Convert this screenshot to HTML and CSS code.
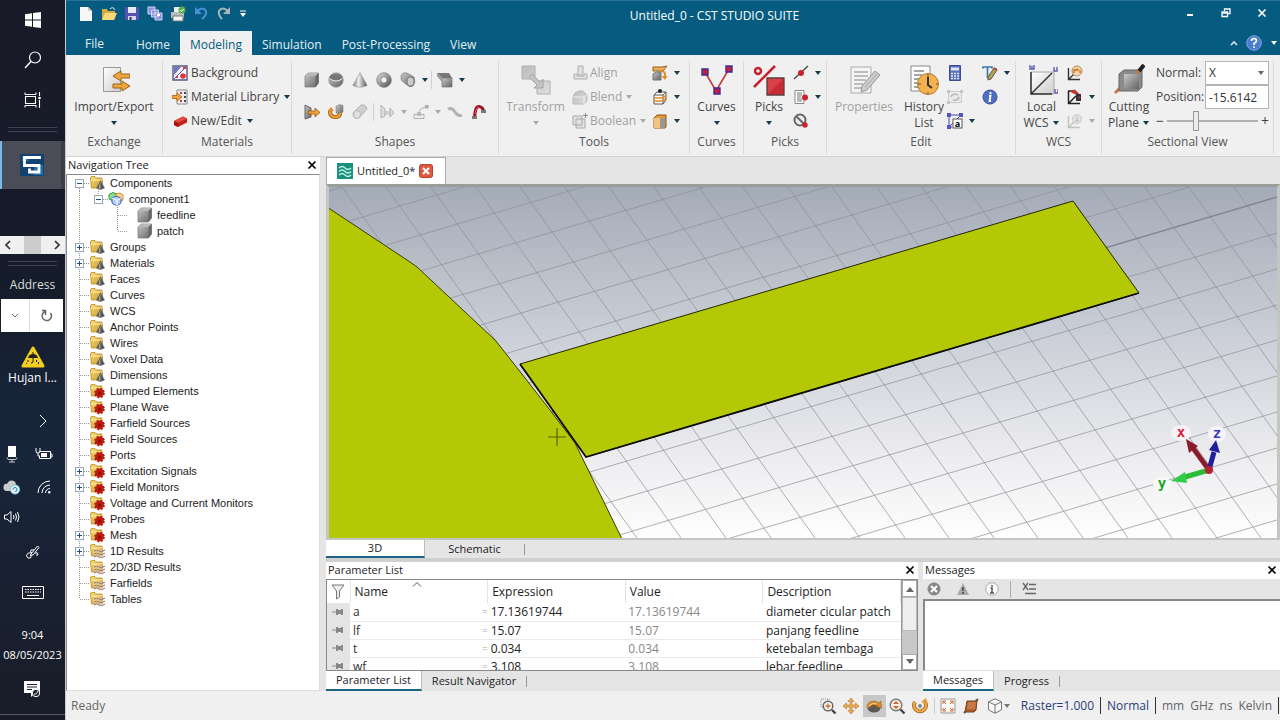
FILE: index.html
```html
<!DOCTYPE html>
<html lang="en">
<head>
<meta charset="utf-8">
<title>Untitled_0 - CST STUDIO SUITE</title>
<link rel="stylesheet" href="styles.css">
</head>
<body>
<svg class="defs" aria-hidden="true">
  <defs>
    <linearGradient id="gGrey" x1="0" y1="0" x2="1" y2="1"><stop offset="0" stop-color="#c9c9c9"/><stop offset="1" stop-color="#626262"/></linearGradient>
    <linearGradient id="gCone" x1="0" x2="1"><stop offset="0" stop-color="#777"/><stop offset=".4" stop-color="#eee"/><stop offset="1" stop-color="#555"/></linearGradient>
    <linearGradient id="gLight" x1="0" y1="0" x2="1" y2="1"><stop offset="0" stop-color="#bdbdbd"/><stop offset="1" stop-color="#dedede"/></linearGradient>
    <linearGradient id="gPlane" x1="0" y1="0" x2="1" y2="1"><stop offset="0" stop-color="#fff"/><stop offset="1" stop-color="#ccc"/></linearGradient>
    <linearGradient id="gFold" x1="0" y1="0" x2="1" y2="1"><stop offset="0" stop-color="#f7dc82"/><stop offset="1" stop-color="#cf9c1f"/></linearGradient>
    <linearGradient id="gSky" x1="0" y1="0" x2="0" y2="1"><stop offset="0" stop-color="#a4abb8"/><stop offset=".5" stop-color="#d2d5dc"/><stop offset=".75" stop-color="#ebebee"/><stop offset="1" stop-color="#fefefe"/></linearGradient>
  </defs>
  <symbol id="arrow" viewBox="0 0 8 8"><path d="M1 2h6L4 6z" fill="currentColor"/></symbol>
  <symbol id="close" viewBox="0 0 10 10"><path d="M1.500 1.500l7 7m0-7l-7 7" stroke="currentColor" stroke-width="1.700"/></symbol>
  <!-- tree lines -->
  <symbol id="t-v" viewBox="0 0 19 16"><path d="M9.500 0v16" stroke="#999" stroke-dasharray="1 1"/></symbol>
  <symbol id="t-n" viewBox="0 0 19 16"><path d="M9.500 0v16M10 8.500h10" stroke="#999" stroke-dasharray="1 1"/></symbol>
  <symbol id="t-l" viewBox="0 0 19 16"><path d="M9.500 0v8M10 8.500h10" stroke="#999" stroke-dasharray="1 1"/></symbol>
  <symbol id="t-plus" viewBox="0 0 19 16"><path d="M9.500 0v16M14 8.500h6" stroke="#999" stroke-dasharray="1 1"/><rect x="5.500" y="4.500" width="8" height="8" fill="#fff" stroke="#9aa8b4"/><path d="M7 8.500h5M9.500 6v5" stroke="#234b86"/></symbol>
  <symbol id="t-minus" viewBox="0 0 19 16"><path d="M9.500 13v3M14 8.500h6" stroke="#999" stroke-dasharray="1 1"/><rect x="5.500" y="4.500" width="8" height="8" fill="#fff" stroke="#9aa8b4"/><path d="M7 8.500h5" stroke="#234b86"/></symbol>
  <symbol id="t-minus2" viewBox="0 0 19 16"><path d="M9.500 0v4M14 8.500h6" stroke="#999" stroke-dasharray="1 1"/><rect x="5.500" y="4.500" width="8" height="8" fill="#fff" stroke="#9aa8b4"/><path d="M7 8.500h5" stroke="#234b86"/></symbol>
  <symbol id="folder" viewBox="0 0 16 16"><path d="M1.500 3q0-1.500 1.500-1.500h3l1.500 1.500h5.500v2l.5 1v7H2.500z" fill="url(#gFold)" stroke="#b98a1c" stroke-width=".8"/><path d="M2 5h11" stroke="#fff0b0"/></symbol>
  <symbol id="f-cone" viewBox="0 0 16 16"><use href="#folder"/><path d="M11.500 5.500L7.500 13q3.500 3 8 0z" fill="#555" stroke="#777" stroke-width=".5"/><path d="M11.400 6L9.500 13.500h2z" fill="#aaa"/></symbol>
  <symbol id="f-gear" viewBox="0 0 16 16"><use href="#folder"/><circle cx="10.500" cy="10" r="4.300" fill="#c01c10" stroke="#b41408" stroke-width="2" stroke-dasharray="1.900 1.470"/><circle cx="10.500" cy="10" r="1.400" fill="#701008"/></symbol>
  <symbol id="f-wave" viewBox="0 0 16 16"><use href="#folder"/><path d="M5 8q2.500-2 5 0t6-1M5 11q2.500-2 5 0t6-1M5 14q2.500-2 5 0t6-1" stroke="#fff" stroke-width="2" stroke-opacity=".6" fill="none"/><path d="M5 8q2.500-2 5 0t6-1M5 11q2.500-2 5 0t6-1M5 14q2.500-2 5 0t6-1" stroke="#8c6a7c" fill="none"/></symbol>
  <symbol id="comp" viewBox="0 0 16 16"><path d="M1 3.500l4-2 4 1.500v5L5 10 1 8z" fill="#8edb8a" stroke="#2e9b35"/><path d="M8 3l4-1 3 2v5l-4 2-3-2z" fill="#ffd690" stroke="#d88a22"/><path d="M4 7l4-2 5 2v5l-4 3-5-3z" fill="#b8cdf8" stroke="#3564c8"/><path d="M4 7l5 2.500L13 7M9 9.500V15" fill="none" stroke="#fff"/></symbol>
  <symbol id="cube" viewBox="0 0 16 16"><path d="M1 4l3-3h10.500v10l-3 4H1z" fill="url(#gGrey)" stroke="#777" stroke-width=".7"/><path d="M1 4l3-3h10.500l-3 3z" fill="#b9b9b9"/><path d="M11.500 4l3-3v10l-3 4z" fill="#666"/></symbol>
  <!-- ribbon icons, small -->
  <symbol id="sphere" viewBox="0 0 16 16"><circle cx="8" cy="8" r="7.200" fill="url(#gGrey)" stroke="#777" stroke-width=".6"/><ellipse cx="8" cy="5.500" rx="6.500" ry="3.500" fill="#777"/><path d="M1.500 6.500q6.500 5 13 0" stroke="#eee" fill="none"/></symbol>
  <symbol id="cone" viewBox="0 0 16 16"><path d="M8 .5L.8 13.500q7 3.500 14.400 0z" fill="url(#gCone)" stroke="#888" stroke-width=".5"/></symbol>
  <symbol id="torus" viewBox="0 0 16 16"><circle cx="8" cy="8" r="5" fill="none" stroke="url(#gGrey)" stroke-width="5"/><circle cx="8" cy="8" r="7.300" fill="none" stroke="#777" stroke-width=".6"/></symbol>
  <symbol id="cyl" viewBox="0 0 16 16"><path d="M1 4q1-4 6-3l7 4q2 5-1 9-3 2-6-1L2 9Q.5 7 1 4z" fill="url(#gGrey)" stroke="#777" stroke-width=".6"/><ellipse cx="10.500" cy="9.500" rx="3.500" ry="4.500" fill="#ccc" stroke="#777"/></symbol>
  <symbol id="bend" viewBox="0 0 16 16"><path d="M0 1h12l3 5H5z" fill="#777"/><path d="M5 6h10v9H5z" fill="url(#gGrey)" stroke="#777" stroke-width=".7"/><path d="M0 1l5 5v4L0 4z" fill="#999"/></symbol>
  <symbol id="extrude" viewBox="0 0 16 16"><path d="M1 1l6 3v9l-6 2z" fill="url(#gGrey)" stroke="#666"/><path d="M4 7h7V4l5 4.500-5 4.500v-3H4z" fill="#eda13a" stroke="#995c10" stroke-width=".8"/></symbol>
  <symbol id="rotate" viewBox="0 0 16 16"><path d="M8 2l4-1.500 3 1V8l-3 2-4-1z" fill="url(#gGrey)" stroke="#777" stroke-width=".5"/><path d="M2 7q0 6 5 6t5-4" fill="none" stroke="#8f5410" stroke-width="4"/><path d="M2 7q0 6 5 6t5-4" fill="none" stroke="#ee9c32" stroke-width="2.600"/><path d="M-.5 7L3 3l3 4z" fill="#e48d24"/></symbol>
  <symbol id="loft" viewBox="0 0 16 16"><path d="M1 9l8-8q5-1 6 4l-8 9q-6 2-6-5z" fill="#cfcfcf" stroke="#b4b4b4"/><ellipse cx="5" cy="10.500" rx="3.500" ry="4" fill="#e0e0e0" stroke="#b8b8b8"/></symbol>
  <symbol id="d-ext" viewBox="0 0 16 16"><path d="M2 1v13l4-2V5zM5 8h6M5 10h6M11 4l4 5-4 4z" fill="#ddd" stroke="#b4b4b4"/></symbol>
  <symbol id="d-curve" viewBox="0 0 16 16"><path d="M1 10.500h10v4H1zM6 10q0-6 7-7" fill="none" stroke="#b0b0b0"/><rect x="4" y="8" width="4" height="4" fill="#bbb"/><rect x="12" y="1" width="3.500" height="3.500" fill="#aaa"/></symbol>
  <symbol id="d-wave" viewBox="0 0 16 16"><path d="M1 5q4-2 7 3t7 3" fill="none" stroke="#b2b2b2" stroke-width="3"/></symbol>
  <symbol id="wire" viewBox="0 0 16 16"><path d="M3.500 14Q4 2 8 2.500t4.500 5" fill="none" stroke="#9e1426" stroke-width="3.200"/><path d="M4 10q1-7 4-7" fill="none" stroke="#f05060"/><path d="M1 12h5v3H1zM10 6h5v3h-5z" fill="#777"/></symbol>
  <symbol id="bg" viewBox="0 0 16 16"><path d="M1 1h14v14H1z" fill="#eef" stroke="#5a5a88" stroke-width="1.400"/><path d="M2 14L14 2v12z" fill="#fff"/><path d="M2 2h7l-7 8z" fill="#7478b8"/><path d="M2 14L14 2" stroke="#55b"/><circle cx="11" cy="11" r="2.800" fill="#d83944"/><path d="M11 3h3M4 12h2" stroke="#c44" stroke-width="2"/></symbol>
  <symbol id="matlib" viewBox="0 0 16 16"><path d="M5 1h10v14H5z" fill="#eee" stroke="#888"/><path d="M8 3h2v2H8zM8 11h2v2H8z" fill="#d33"/><path d="M12 3h2v2h-2zM12 7h2v2h-2zM12 11h2v2h-2z" fill="#446"/><path d="M0 6.500h5V4l5 4-5 4V9.500H0z" fill="#f0a440" stroke="#a66510" stroke-width=".8"/></symbol>
  <symbol id="brick" viewBox="0 0 16 16"><path d="M2 8l9-4.500 4 2v4L6 14l-4-2z" fill="#c5201c"/><path d="M2 8l9-4.500 4 2L6 10z" fill="#e04c40"/><path d="M2 8l4 2v4l-4-2z" fill="#a11210"/></symbol>
  <symbol id="align" viewBox="0 0 16 16"><path d="M6 1h5v9H6zM2 9h3v2h7V9h3v5H2z" fill="#e0e0e0" stroke="#b0b0b0"/></symbol>
  <symbol id="blend" viewBox="0 0 16 16"><path d="M1 15V8q1-5 6-6h4l4 4v6l-3 3z" fill="url(#gLight)" stroke="#b8b8b8"/><path d="M1 8h11v7M12 8l3-2" fill="none" stroke="#eee"/></symbol>
  <symbol id="bool" viewBox="0 0 16 16"><path d="M1 3h9v9H1zM4 6h9v9H4z" fill="#ddd" fill-opacity=".8" stroke="#aaa"/><path d="M11 2.500h5M13.500 0v5" stroke="#888"/></symbol>
  <symbol id="tl1" viewBox="0 0 16 16"><path d="M1 2h9l5-1-4 5H1z" fill="#ecae5c" stroke="#99601c"/><path d="M1 15V9q3-3 8-2v8z" fill="url(#gGrey)" stroke="#777"/><path d="M9 6q5 0 4 6" fill="none" stroke="#e08a22" stroke-width="2"/><path d="M9.500 11h6L13 15z" fill="#e08a22"/></symbol>
  <symbol id="tl2" viewBox="0 0 16 16"><path d="M2 6l3-3h9v8l-3 4H2z" fill="#fff" stroke="#555"/><path d="M2 6h9v9M11 6l3-3" stroke="#555" fill="none"/><path d="M2 9l9 0 3-3M2 12h9l3-3" stroke="#e08a22" stroke-width="1.500" fill="none"/><circle cx="8" cy="2" r="2" fill="#222"/></symbol>
  <symbol id="tl3" viewBox="0 0 16 16"><path d="M2 5l3-3h9v12l-1 1H2z" fill="#e29a3c" stroke="#8c5510"/><path d="M8 5h5v10H8z" fill="#999"/><path d="M2 5h6v10H2z" fill="#f4c47a"/></symbol>
  <symbol id="pk1" viewBox="0 0 16 16"><path d="M1 14L15 1" stroke="#444" stroke-width="1.300"/><circle cx="8" cy="8" r="3" fill="#c8232c"/></symbol>
  <symbol id="pk2" viewBox="0 0 16 16"><path d="M2 1.500h9v13H2z" fill="#fff" stroke="#888"/><path d="M4 4h5M4 6h5M4 8h4M4 10h5M4 12h5" stroke="#777"/><circle cx="12" cy="8.500" r="3" fill="#c8232c"/></symbol>
  <symbol id="pk3" viewBox="0 0 16 16"><circle cx="7" cy="7" r="5.500" fill="#eee" stroke="#666" stroke-width="2"/><path d="M3 3l8 8" stroke="#666" stroke-width="2"/><circle cx="12" cy="12" r="2.700" fill="#c8232c"/></symbol>
  <symbol id="calc" viewBox="0 0 16 16"><path d="M2.500 .5h11v15h-11z" fill="#5a6fb8" stroke="#3b4d90"/><path d="M4 2.500h8v3H4z" fill="#dde6fa"/><path d="M4 8.500h8M4 11h8M4 13.500h8" stroke="#dde6fa" stroke-width="1.300" stroke-dasharray="2 1"/></symbol>
  <symbol id="refr" viewBox="0 0 16 16"><path d="M1.500 2.500h13v11h-13z" fill="#eaeaea" stroke="#ccc"/><path d="M0 1h3v3H0zM13 1h3v3h-3zM0 12h3v3H0z" fill="#c4c4c4"/><path d="M4 8q1-4 7-2M12 8q-1 4-6 3" fill="none" stroke="#b8b8b8" stroke-width="1.500"/></symbol>
  <symbol id="parama" viewBox="0 0 16 16"><path d="M2 2l12 0M2 2v12h3M2 14L14 2" fill="none" stroke="#4646b0"/><path d="M0 0h4v4H0zM12 0h4v4h-4zM0 12h4v4H0z" fill="#5555c0"/><rect x="6" y="6" width="9" height="9" fill="#fff" stroke="#555"/><text x="10.500" y="13.500" font-size="9" font-weight="bold" text-anchor="middle">a</text></symbol>
  <symbol id="tpen" viewBox="0 0 16 16"><path d="M1 3.500V2h9v1.500M5.500 2v11" fill="none" stroke="#3c78b0" stroke-width="1.700"/><path d="M6 12L12 3l3 2-6 9-3 1z" fill="#b8a24c" stroke="#555"/><path d="M12 3l3 2" stroke="#c33" stroke-width="2"/></symbol>
  <symbol id="info" viewBox="0 0 16 16"><circle cx="8" cy="8" r="7" fill="#4f6fc4" stroke="#3450a0"/><path d="M8.500 3v2.200M7 7h1.500l-1 5h1.500" stroke="#fff" stroke-width="1.800" fill="none"/></symbol>
  <symbol id="w1" viewBox="0 0 16 16"><path d="M1.500 3v11.500H13M2 14l5-5" fill="none" stroke="#333" stroke-width="1.400"/><circle cx="10" cy="6" r="5" fill="#f3d6b0" stroke="#b98a5a"/><path d="M7 8V5h4l-1-1.500M13 5v3" stroke="#d07018" fill="none" stroke-width="1.300"/></symbol>
  <symbol id="w2" viewBox="0 0 16 16"><path d="M1.500 2v12.500H13M2 14l7-7M1 2h6" fill="none" stroke="#222" stroke-width="1.500"/><path d="M4 2l6 3M7 1l5 5" stroke="#c33" stroke-width="2"/><path d="M9 5h5v7H9z" fill="#333"/><path d="M12 7v3" stroke="#d33"/></symbol>
  <symbol id="w3" viewBox="0 0 16 16"><path d="M1.500 3v11.500H13M2 14l9-9" fill="none" stroke="#c0c0c0" stroke-width="1.400"/><circle cx="10" cy="6" r="4.500" fill="#e4e4e4" stroke="#c8c8c8"/><path d="M10 3v6M8 7q2 3 4 0" fill="none" stroke="#bbb"/></symbol>
  <!-- ribbon icons, large -->
  <symbol id="impexp" viewBox="0 0 32 32"><path d="M5.500 3.500h17v24h-17z" fill="url(#gPlane)" stroke="#999"/><path d="M32 10h-9V7l-8 5 8 5v-3h9zM15 20h9v-3l8 5-8 5v-3h-9z" fill="#efa63e" stroke="#9a6216"/></symbol>
  <symbol id="transform" viewBox="0 0 32 32"><path d="M2 2h13v13H2zM17 17h13v13H17z" fill="url(#gLight)" stroke="#b0b0b0"/><path d="M12 10l8 8 3-3v9h-9l3-3-8-8z" fill="#c4c4c4" stroke="#a4a4a4"/></symbol>
  <symbol id="curves" viewBox="0 0 32 32"><path d="M4 8l11 19L28 5" fill="none" stroke="#c8323a" stroke-width="1.500"/><path d="M1 5h6v6H1zM25 2h6v6h-6zM13 24h6v6h-6z" fill="#c81e3a" stroke="#3c2c98" stroke-width="1.400"/></symbol>
  <symbol id="picks" viewBox="0 0 32 32"><path d="M1 23L22 2" stroke="#c42430" stroke-width="2.600"/><circle cx="5" cy="7" r="3" fill="none" stroke="#c42430" stroke-width="2.500"/><path d="M14 14h17v17H14z" fill="#c92a34" stroke="#5c4040" stroke-width="1.300"/><path d="M15 15h15L15 30z" fill="#d94048"/></symbol>
  <symbol id="props" viewBox="0 0 32 32"><path d="M3 3h20v26H3z" fill="#f4f4f4" stroke="#aaa"/><path d="M6 8h14M6 12h14M6 16h12M6 20h9M6 24h9" stroke="#aaa" stroke-width="1.500"/><path d="M14 22L27 7l5 4-13 15-6 2z" fill="#ccc" stroke="#999"/><path d="M17 23L29 10" stroke="#aaa"/></symbol>
  <symbol id="history" viewBox="0 0 32 32"><path d="M3 2h19v25H3z" fill="#fff" stroke="#888"/><path d="M6 7h10M6 11h8M6 15h5M6 19h4M6 23h5" stroke="#888" stroke-width="1.500"/><circle cx="20" cy="20" r="10.500" fill="#f3b24d" stroke="#b77a24"/><path d="M20 13v8l4 3" stroke="#333" stroke-width="2" fill="none"/><path d="M20 10v3M20 28v2M10 20h3M28 20h2" stroke="#555"/></symbol>
  <symbol id="wcs" viewBox="0 0 32 32"><path d="M5 8h23v22H5z" fill="url(#gPlane)" stroke="#aaa"/><path d="M5 8v22h21M5 30L26 9" fill="none" stroke="#333" stroke-width="1.500"/><path d="M4 1v4h2V2v3h2V1M28 3v4h3V3M29 25v4h3v-4" fill="none" stroke="#5c5cb8" stroke-width="1.400"/></symbol>
  <symbol id="cut" viewBox="0 0 32 32"><path d="M2 29l7-7" stroke="#d4763a" stroke-width="3"/><path d="M6 10l5-4h18v17l-4 4H6z" fill="#8a8a8a" stroke="#666"/><path d="M11 10h15v15H11z" fill="url(#gGrey)"/><path d="M24 9l3-3" stroke="#d4763a" stroke-width="3"/><path d="M26 7l5-6" stroke="#222" stroke-width="4"/></symbol>
</svg>

<div class="screen">
  <aside class="taskbar">
    <button class="tb-btn" aria-label="Start"><svg width="16" height="16" viewBox="0 0 16 16"><path d="M0 2.200l7-1v6.300H0zM8 1l8-1v7.500H8zM0 8.500h7v6.300l-7-1zM8 8.500h8V16l-8-1z" fill="#fff"/></svg></button>
    <button class="tb-btn" aria-label="Search"><svg width="18" height="18" viewBox="0 0 18 18"><circle cx="11" cy="6.500" r="5.500" fill="none" stroke="#fff" stroke-width="1.200"/><path d="M7 10.500L1 17" stroke="#fff" stroke-width="1.400"/></svg></button>
    <button class="tb-btn" aria-label="Task view"><svg width="18" height="16" viewBox="0 0 18 16"><path d="M1.500 4.500h10v7h-10zM1 2.500V.5M12 2.500V.5M1 2.500h11M1 13.500h11v2M1 13.500v2M15.500 0v4M15.500 8v8" fill="none" stroke="#fff" stroke-width="1.100"/><circle cx="15.500" cy="6" r="1.300" fill="#fff"/></svg></button>
    <div class="grip"></div>
    <button class="tb-active" aria-label="CST Studio Suite"><svg width="24" height="24" viewBox="0 0 24 24"><path d="M0 1h24v22H0z" fill="#124270"/><path d="M2 3h7v5H2zM14 12h9v10h-9z" fill="#1e6fae"/><path d="M21 4.500H4.500v8H19v6.500H9.500v-3.500" fill="none" stroke="#fff" stroke-width="2.800"/></svg></button>
    <div class="tb-gap"></div>
    <div class="tb-scroll"><svg width="8" height="10" viewBox="0 0 8 10"><path d="M6 1L2 5l4 4" fill="none" stroke="#333" stroke-width="1.700"/></svg><i></i><svg width="8" height="10" viewBox="0 0 8 10"><path d="M2 1l4 4-4 4" fill="none" stroke="#333" stroke-width="1.700"/></svg></div>
    <div class="grip"></div>
    <div class="tb-addr">Address</div>
    <div class="tb-box">
      <button aria-label="Previous locations"><svg width="8" height="6" viewBox="0 0 8 6"><path d="M1 1l3 3 3-3" fill="none" stroke="#666"/></svg></button>
      <button aria-label="Refresh"><svg width="12" height="13" viewBox="0 0 12 13"><path d="M4 2.500A4.700 4.700 0 1 0 9.500 4M1 1.500h3.500V6" fill="none" stroke="#666" stroke-width="1.500"/></svg></button>
    </div>
    <div class="tb-warn"><svg width="26" height="24" viewBox="0 0 26 24"><path d="M13 3l10 18H3z" fill="#f4ce1c" stroke="#f4ce1c" stroke-width="3" stroke-linejoin="round"/><path d="M8 13q1-4 5-4t5 4z" fill="#222"/><path d="M13 7v10q-1 2-2 .5" stroke="#222" fill="none"/><path d="M8 15v2M16.500 15v2M18.500 17v2M6.500 18v1" stroke="#222"/></svg></div>
    <div class="tb-news">Hujan l...</div>
    <div class="tb-more"><svg width="8" height="14" viewBox="0 0 8 14"><path d="M1 1l6 6-6 6" fill="none" stroke="#fff"/></svg></div>
    <div class="tb-pair">
      <svg width="12" height="18" viewBox="0 0 12 18"><path d="M2 1h8v11H2z" fill="#fff"/><path d="M1 12.500q0 2 2 2h6q2 0 2-2M6 15v2M3 17h6" fill="none" stroke="#ccc"/></svg>
      <svg width="18" height="14" viewBox="0 0 18 14"><path d="M4.500 4.500h11v7h-11V9M15.500 7h1.500v3h-1.500" fill="none" stroke="#fff"/><path d="M6 6h6v4H6z" fill="#fff"/><path d="M1 1v3q0 2 2 2t2-2V1M3 6v3h2" fill="none" stroke="#fff"/></svg>
    </div>
    <div class="tb-pair">
      <svg width="18" height="16" viewBox="0 0 18 16"><path d="M4 12q-4 0-3.500-4T4 5q2-5 7-3 2 1 2 4l-3 6z" fill="#ccc"/><circle cx="12" cy="10.500" r="4.600" fill="#e4f4fc" stroke="#7fc0de"/><path d="M10 10.500a2 2 0 1 1 2 2" fill="none" stroke="#2277aa"/></svg>
      <svg width="14" height="14" viewBox="0 0 14 14"><path d="M1 13A12 12 0 0 1 13 1M5 13a8 8 0 0 1 8-8M8.500 13A4.500 4.500 0 0 1 13 8.500" fill="none" stroke="#fff"/><circle cx="12.300" cy="12.300" r="1.200" fill="#fff"/></svg>
    </div>
    <div class="tb-pair tb-sound"><svg width="16" height="14" viewBox="0 0 16 14"><path d="M.5 5H3l4-3.500v11L3 9H.5zM9.500 5q1 2 0 4M11.500 3.500q2 3.500 0 7M13.500 2q3 5 0 10" fill="none" stroke="#fff"/></svg></div>
    <div class="tb-pen"><svg width="14" height="14" viewBox="0 0 14 14"><path d="M5 9l6.500-8L13 2.500 7 10l-2.500.5zM8 5H5Q4 7 6 8q-5-1-5.500 3 1 3 4 2 1-1 0-3M9 8q3-1 3 1t-2 1" fill="none" stroke="#fff"/></svg></div>
    <div class="tb-key"><svg width="22" height="13" viewBox="0 0 22 13"><path d="M.5.500h21v12H.5z" fill="none" stroke="#fff"/><path d="M3 3.500h16M3 6h16" stroke="#fff" stroke-dasharray="1.500 1"/><path d="M5 9.500h12" stroke="#fff"/></svg></div>
    <div class="tb-clock"><span>9:04</span><span>08/05/2023</span></div>
    <div class="tb-note"><svg width="17" height="17" viewBox="0 0 17 17"><path d="M0 0h16v12h-5l-4 4v-4H0z" fill="#fff"/><path d="M3 3.500h10M3 6h10M3 8.500h5" stroke="#1b2030"/><circle cx="12" cy="12" r="3.700" fill="#1b2030" stroke="#fff"/><path d="M10 13q3 1 3.500-3" stroke="#fff" fill="none"/></svg></div>
  </aside>

  <div class="app">
    <header class="titlebar">
      <div class="quick">
        <button aria-label="New"><svg class="ic" viewBox="0 0 16 16"><path d="M2 1h8l4 4v10H2z" fill="#f6f6f4"/><path d="M10 1v4h4z" fill="#ccc"/></svg></button>
        <button aria-label="Open"><svg class="ic" viewBox="0 0 16 16"><path d="M1 3h5l1 2h7v8H1z" fill="#d8a93c"/><path d="M1 14L4 7h12l-3 7z" fill="#f9d978"/><path d="M9 3q3-3 5 1" stroke="#eee" fill="none"/></svg></button>
        <button aria-label="Save"><svg class="ic" viewBox="0 0 16 16"><path d="M1 1h13l1 1v12H1z" fill="#5552b4"/><path d="M4 1h8v6H4z" fill="#e8eaf6"/><path d="M4 10h8v4H4z" fill="#d4d6ee"/><path d="M5.500 11h2v3h-2z" fill="#334"/></svg></button>
        <button aria-label="Save all"><svg class="ic" viewBox="0 0 16 16"><path d="M1 1h7v7H1zM4.500 4h7v7h-7zM8 7h7v7H8z" fill="#8c90dc" stroke="#d0d4f4"/><path d="M10 8h3v2h-3z" fill="#fff"/></svg></button>
        <button aria-label="Print"><svg class="ic" viewBox="0 0 16 16"><path d="M4 1h7v5H4z" fill="#eee"/><path d="M1 6h13v6H1z" fill="#bbb"/><path d="M3 10h10v5H3z" fill="#f4f4f4" stroke="#777"/><circle cx="12" cy="4" r="3.500" fill="#58b248"/><path d="M10.500 4l1 1.500L14 3" stroke="#fff" fill="none"/></svg></button>
        <button aria-label="Undo"><svg class="ic" viewBox="0 0 16 16"><path d="M4 5q6-5 9 0 1 4-4 8" fill="none" stroke="#4c8fd8" stroke-width="2"/><path d="M2 1v7h7z" fill="#4c8fd8"/></svg></button>
        <button aria-label="Redo"><svg class="ic" viewBox="0 0 16 16"><path d="M12 5Q6 0 3 5q-1 4 3 8" fill="none" stroke="#a8b4bc" stroke-width="2"/><path d="M14 1v7H7z" fill="#a8b4bc"/></svg></button>
        <button class="q-more" aria-label="Customize"><svg width="8" height="8" viewBox="0 0 8 8"><path d="M1 1h6" stroke="#fff"/><path d="M1 3h6L4 7z" fill="#fff"/></svg></button>
      </div>
      <div class="title">Untitled_0 - CST STUDIO SUITE</div>
      <div class="winbtns">
        <button aria-label="Minimize"><svg width="10" height="10" viewBox="0 0 10 10"><path d="M2 7h6" stroke="#fff" stroke-width="2"/></svg></button>
        <button aria-label="Restore"><svg width="10" height="10" viewBox="0 0 10 10"><path d="M3.500 3V1h5.500v4.500H7M1 4h5.500v4.500H1zM1 5h5" fill="none" stroke="#fff" stroke-width="1.300"/></svg></button>
        <button aria-label="Close" class="white"><svg width="10" height="10"><use href="#close"/></svg></button>
      </div>
    </header>
    <nav class="tabs">
      <button class="file">File</button><button>Home</button><button class="on">Modeling</button><button>Simulation</button><button>Post-Processing</button><button>View</button>
      <div class="helpers">
        <button aria-label="Collapse ribbon"><svg width="8" height="6" viewBox="0 0 8 6"><path d="M1 5l3-3 3 3" fill="none" stroke="#d8e0e4" stroke-width="1.700"/></svg></button>
        <button aria-label="Help"><svg width="16" height="16" viewBox="0 0 16 16"><circle cx="8" cy="8" r="7.300" fill="#4a7cd0" stroke="#7ea4e0"/><path d="M5.500 6q0-2.500 2.500-2.500T10.500 6Q10.500 7 8 8.500V10M8 11.500v1.500" fill="none" stroke="#fff" stroke-width="1.700"/></svg></button>
        <button class="white" aria-label="Help options"><svg width="8" height="8"><use href="#arrow"/></svg></button>
      </div>
    </nav>

    <section class="ribbon">
      <div class="group">
        <div class="gbody center"><button class="big"><svg class="lg"><use href="#impexp"/></svg><span>Import/Export</span><svg class="ar"><use href="#arrow"/></svg></button></div>
        <div class="cap">Exchange</div>
      </div>
      <div class="group">
        <div class="gbody mats"><div class="rows">
          <button class="lab"><svg class="ic"><use href="#bg"/></svg><span>Background</span></button>
          <button class="lab"><svg class="ic"><use href="#matlib"/></svg><span>Material Library</span><svg class="ar"><use href="#arrow"/></svg></button>
          <button class="lab"><svg class="ic"><use href="#brick"/></svg><span>New/Edit</span><svg class="ar"><use href="#arrow"/></svg></button>
        </div></div>
        <div class="cap">Materials</div>
      </div>
      <div class="group">
        <div class="gbody shapes">
          <div class="strip">
            <button aria-label="Brick"><svg class="ic"><use href="#cube"/></svg></button><button aria-label="Sphere"><svg class="ic"><use href="#sphere"/></svg></button><button aria-label="Cone"><svg class="ic"><use href="#cone"/></svg></button><button aria-label="Torus"><svg class="ic"><use href="#torus"/></svg></button><button aria-label="Cylinder"><svg class="ic"><use href="#cyl"/></svg></button><svg class="ar"><use href="#arrow"/></svg><i></i><button aria-label="Bend"><svg class="ic"><use href="#bend"/></svg></button><svg class="ar"><use href="#arrow"/></svg>
          </div>
          <div class="strip">
            <button aria-label="Extrude"><svg class="ic"><use href="#extrude"/></svg></button><button aria-label="Rotate"><svg class="ic"><use href="#rotate"/></svg></button><button aria-label="Loft"><svg class="ic"><use href="#loft"/></svg></button><i></i><button aria-label="Extrude curve"><svg class="ic"><use href="#d-ext"/></svg></button><svg class="ar off"><use href="#arrow"/></svg><button aria-label="Sweep curve"><svg class="ic"><use href="#d-curve"/></svg></button><svg class="ar off"><use href="#arrow"/></svg><button aria-label="Trace"><svg class="ic"><use href="#d-wave"/></svg></button><button aria-label="Bond wire"><svg class="ic"><use href="#wire"/></svg></button>
          </div>
        </div>
        <div class="cap">Shapes</div>
      </div>
      <div class="group">
        <div class="gbody tools">
          <button class="big off"><svg class="lg"><use href="#transform"/></svg><span>Transform</span><svg class="ar"><use href="#arrow"/></svg></button>
          <div class="rows">
            <button class="lab off"><svg class="ic"><use href="#align"/></svg><span>Align</span></button>
            <button class="lab off"><svg class="ic"><use href="#blend"/></svg><span>Blend</span><svg class="ar"><use href="#arrow"/></svg></button>
            <button class="lab off"><svg class="ic"><use href="#bool"/></svg><span>Boolean</span><svg class="ar"><use href="#arrow"/></svg></button>
          </div>
          <div class="rows">
            <button class="mini" aria-label="Shell"><svg class="ic"><use href="#tl1"/></svg><svg class="ar"><use href="#arrow"/></svg></button>
            <button class="mini" aria-label="Modify"><svg class="ic"><use href="#tl2"/></svg><svg class="ar"><use href="#arrow"/></svg></button>
            <button class="mini" aria-label="Shape tools"><svg class="ic"><use href="#tl3"/></svg><svg class="ar"><use href="#arrow"/></svg></button>
          </div>
        </div>
        <div class="cap">Tools</div>
      </div>
      <div class="group">
        <div class="gbody center"><button class="big"><svg class="lg"><use href="#curves"/></svg><span>Curves</span><svg class="ar"><use href="#arrow"/></svg></button></div>
        <div class="cap">Curves</div>
      </div>
      <div class="group">
        <div class="gbody picks">
          <button class="big"><svg class="lg"><use href="#picks"/></svg><span>Picks</span><svg class="ar"><use href="#arrow"/></svg></button>
          <div class="rows">
            <button class="mini" aria-label="Pick point"><svg class="ic"><use href="#pk1"/></svg><svg class="ar"><use href="#arrow"/></svg></button>
            <button class="mini" aria-label="Pick list"><svg class="ic"><use href="#pk2"/></svg><svg class="ar"><use href="#arrow"/></svg></button>
            <button class="mini" aria-label="Clear picks"><svg class="ic"><use href="#pk3"/></svg></button>
          </div>
        </div>
        <div class="cap">Picks</div>
      </div>
      <div class="group">
        <div class="gbody edit">
          <button class="big off"><svg class="lg"><use href="#props"/></svg><span>Properties</span></button>
          <button class="big"><svg class="lg"><use href="#history"/></svg><span>History<br>List</span></button>
          <div class="rows">
            <button class="mini" aria-label="Calculator"><svg class="ic"><use href="#calc"/></svg></button>
            <button class="mini" aria-label="Parametric update"><svg class="ic"><use href="#refr"/></svg></button>
            <button class="mini" aria-label="Parameters"><svg class="ic"><use href="#parama"/></svg><svg class="ar"><use href="#arrow"/></svg></button>
          </div>
          <div class="rows">
            <button class="mini" aria-label="Text"><svg class="ic"><use href="#tpen"/></svg><svg class="ar"><use href="#arrow"/></svg></button>
            <button class="mini" aria-label="Information"><svg class="ic"><use href="#info"/></svg></button>
          </div>
        </div>
        <div class="cap">Edit</div>
      </div>
      <div class="group">
        <div class="gbody wcs">
          <button class="big"><svg class="lg"><use href="#wcs"/></svg><span>Local<br>WCS<svg class="ar"><use href="#arrow"/></svg></span></button>
          <div class="rows">
            <button class="mini" aria-label="Transform WCS"><svg class="ic"><use href="#w1"/></svg></button>
            <button class="mini" aria-label="Align WCS"><svg class="ic"><use href="#w2"/></svg><svg class="ar"><use href="#arrow"/></svg></button>
            <button class="mini off" aria-label="Fix WCS"><svg class="ic"><use href="#w3"/></svg><svg class="ar"><use href="#arrow"/></svg></button>
          </div>
        </div>
        <div class="cap">WCS</div>
      </div>
      <div class="group">
        <div class="gbody section">
          <button class="big"><svg class="lg"><use href="#cut"/></svg><span>Cutting<br>Plane<svg class="ar"><use href="#arrow"/></svg></span></button>
          <div class="fields">
            <div class="field"><label for="normal">Normal:</label><span class="sel"><select id="normal"><option>X</option><option>Y</option><option>Z</option></select><svg class="ar"><use href="#arrow"/></svg></span></div>
            <div class="field"><label for="pos">Position:</label><input id="pos" type="text" value="-15.6142"></div>
            <div class="slide"><span>−</span><input type="range" min="0" max="100" value="30" aria-label="Plane position"><span>+</span></div>
          </div>
        </div>
        <div class="cap">Sectional View</div>
      </div>
    </section>

    <main class="work">
      <section class="nav">
        <h2 class="phead">Navigation Tree<button aria-label="Close tree"><svg width="10" height="10"><use href="#close"/></svg></button></h2>
        <ul class="tree">
          <li><svg class="tl"><use href="#t-minus"/></svg><svg class="ti"><use href="#f-cone"/></svg>Components</li>
          <li><svg class="tl"><use href="#t-v"/></svg><svg class="tl"><use href="#t-minus2"/></svg><svg class="ti"><use href="#comp"/></svg>component1</li>
          <li class="leaf"><svg class="tl"><use href="#t-v"/></svg><svg class="tl"></svg><svg class="tl"><use href="#t-n"/></svg><svg class="ti"><use href="#cube"/></svg>feedline</li>
          <li class="leaf"><svg class="tl"><use href="#t-v"/></svg><svg class="tl"></svg><svg class="tl"><use href="#t-l"/></svg><svg class="ti"><use href="#cube"/></svg>patch</li>
          <li><svg class="tl"><use href="#t-plus"/></svg><svg class="ti"><use href="#f-cone"/></svg>Groups</li>
          <li><svg class="tl"><use href="#t-plus"/></svg><svg class="ti"><use href="#f-cone"/></svg>Materials</li>
          <li><svg class="tl"><use href="#t-n"/></svg><svg class="ti"><use href="#f-cone"/></svg>Faces</li>
          <li><svg class="tl"><use href="#t-n"/></svg><svg class="ti"><use href="#f-cone"/></svg>Curves</li>
          <li><svg class="tl"><use href="#t-n"/></svg><svg class="ti"><use href="#f-cone"/></svg>WCS</li>
          <li><svg class="tl"><use href="#t-n"/></svg><svg class="ti"><use href="#f-cone"/></svg>Anchor Points</li>
          <li><svg class="tl"><use href="#t-n"/></svg><svg class="ti"><use href="#f-cone"/></svg>Wires</li>
          <li><svg class="tl"><use href="#t-n"/></svg><svg class="ti"><use href="#f-cone"/></svg>Voxel Data</li>
          <li><svg class="tl"><use href="#t-n"/></svg><svg class="ti"><use href="#f-cone"/></svg>Dimensions</li>
          <li><svg class="tl"><use href="#t-n"/></svg><svg class="ti"><use href="#f-gear"/></svg>Lumped Elements</li>
          <li><svg class="tl"><use href="#t-n"/></svg><svg class="ti"><use href="#f-gear"/></svg>Plane Wave</li>
          <li><svg class="tl"><use href="#t-n"/></svg><svg class="ti"><use href="#f-gear"/></svg>Farfield Sources</li>
          <li><svg class="tl"><use href="#t-n"/></svg><svg class="ti"><use href="#f-gear"/></svg>Field Sources</li>
          <li><svg class="tl"><use href="#t-n"/></svg><svg class="ti"><use href="#f-gear"/></svg>Ports</li>
          <li><svg class="tl"><use href="#t-plus"/></svg><svg class="ti"><use href="#f-gear"/></svg>Excitation Signals</li>
          <li><svg class="tl"><use href="#t-plus"/></svg><svg class="ti"><use href="#f-gear"/></svg>Field Monitors</li>
          <li><svg class="tl"><use href="#t-n"/></svg><svg class="ti"><use href="#f-gear"/></svg>Voltage and Current Monitors</li>
          <li><svg class="tl"><use href="#t-n"/></svg><svg class="ti"><use href="#f-gear"/></svg>Probes</li>
          <li><svg class="tl"><use href="#t-plus"/></svg><svg class="ti"><use href="#f-gear"/></svg>Mesh</li>
          <li><svg class="tl"><use href="#t-plus"/></svg><svg class="ti"><use href="#f-wave"/></svg>1D Results</li>
          <li><svg class="tl"><use href="#t-n"/></svg><svg class="ti"><use href="#f-wave"/></svg>2D/3D Results</li>
          <li><svg class="tl"><use href="#t-n"/></svg><svg class="ti"><use href="#f-wave"/></svg>Farfields</li>
          <li><svg class="tl"><use href="#t-l"/></svg><svg class="ti"><use href="#f-wave"/></svg>Tables</li>
        </ul>
      </section>

      <div class="right">
        <div class="doctabs">
          <div class="doctab"><svg class="ic" viewBox="0 0 16 16"><path d="M0 0h16v16H0z" fill="#17907c"/><path d="M2 5q3-3 6 0t6 0M2 8.500q3-3 6 0t6 0M2 12q3-3 6 0t6 0" fill="none" stroke="#c8f4e8" stroke-width="1.300"/></svg><span>Untitled_0*</span><button aria-label="Close document"><svg width="14" height="14" viewBox="0 0 14 14"><rect x=".5" y=".5" width="13" height="13" rx="2" fill="#dc5a40" stroke="#b8432c"/><path d="M4 4l6 6m0-6l-6 6" stroke="#fff" stroke-width="2"/></svg></button></div>
        </div>
        <div class="view">
          <svg viewBox="0 0 948 351" preserveAspectRatio="xMidYMid slice">
            <rect width="948" height="351" fill="url(#gSky)"/>
            <g stroke="#8c9096" stroke-opacity=".7" fill="none">
              <path d="M0 4L948-277M0 40L948-241M0 75L948-205M0 111L948-169M0 147L948-133M0 183L948-98M0 219L948-62M0 255L948-26M0 326L948 46M0 362L948 82M0 398L948 118M0 434L948 153M0 470L948 189M0 506L948 225M0 542L948 261M0 577L948 297M0 613L948 333"/>
              <path d="M13 0L263 351M57 0L308 351M102 0L352 351M147 0L397 351M191 0L442 351M236 0L486 351M280 0L531 351M325 0L576 351M370 0L620 351M414 0L665 351M459 0L709 351M503 0L754 351M548 0L799 351M593 0L843 351M637 0L888 351M682 0L932 351M726 0L977 351M771 0L1021 351M816 0L1066 351M860 0L1111 351M905 0L1155 351"/>
              <path d="M0 291L948 10" stroke="#7e8690" stroke-opacity="1" stroke-width="1.400"/>
            </g>
            <path d="M-1 21L1 22 81 75 88 80 166 153 178 168 221 223 246 256 293 352H-1z" fill="#b5c805" stroke="#3a3f00"/>
            <path d="M191 177L744 14 810 106 257 270z" fill="#b5c805" stroke="#222600"/>
            <path d="M191 177L257 270 810 106" fill="none" stroke="#0c0d00" stroke-width="1.800"/>
            <path d="M219 250h18M228 241v18" stroke="#55600a" stroke-width="1.200"/>
            <g class="axes">
              <ellipse cx="852" cy="246" rx="10" ry="8" fill="#f6f2f5"/><ellipse cx="888" cy="247" rx="9" ry="8" fill="#f4f4fa"/><ellipse cx="833" cy="298" rx="9" ry="8" fill="#f6faf6"/>
              <path d="M880 283L864 261" stroke="#8c1c2c" stroke-width="5"/><path d="M857 252l12 7-9 7z" fill="#8c1c2c"/>
              <path d="M880 283l5-18" stroke="#20209c" stroke-width="5"/><path d="M887 253l4 13-11-3z" fill="#20209c"/>
              <path d="M880 283l-24 7" stroke="#2cbc3c" stroke-width="5"/><path d="M842 294l14-9 2 11z" fill="#30cc44"/>
              <circle cx="880" cy="283" r="4" fill="#b42430"/>
              <text x="852" y="250" fill="#d41c3c">x</text><text x="888" y="251" fill="#3838c4">z</text><text x="833" y="301" fill="#18a428">y</text>
            </g>
          </svg>
        </div>
        <div class="vtabs"><button class="on">3D</button><button>Schematic</button><i></i></div>
        <div class="bottom">
          <section class="params">
            <h2 class="phead">Parameter List<button aria-label="Close parameters"><svg width="10" height="10"><use href="#close"/></svg></button></h2>
            <div class="ptable">
              <table>
                <thead><tr><th><svg width="14" height="16" viewBox="0 0 14 16"><path d="M1 1h12L8.500 7v6l-3 2V7z" fill="#eee" stroke="#777"/></svg></th><th class="sorted">Name<svg width="8" height="5" viewBox="0 0 8 5"><path d="M0 4.500L4 .5l4 4" fill="none" stroke="#555"/></svg></th><th>Expression</th><th>Value</th><th>Description</th></tr></thead>
                <tbody>
                  <tr><td><svg class="pin" viewBox="0 0 12 8"><path d="M0 4h5" stroke="#888"/><path d="M4 1h2v1h3V1h2v6H9V6H6v1H4z" fill="#888"/></svg></td><td>a<i>=</i></td><td>17.13619744</td><td>17.13619744</td><td>diameter cicular patch</td></tr>
                  <tr><td><svg class="pin" viewBox="0 0 12 8"><path d="M0 4h5" stroke="#888"/><path d="M4 1h2v1h3V1h2v6H9V6H6v1H4z" fill="#888"/></svg></td><td>lf<i>=</i></td><td>15.07</td><td>15.07</td><td>panjang feedline</td></tr>
                  <tr><td><svg class="pin" viewBox="0 0 12 8"><path d="M0 4h5" stroke="#888"/><path d="M4 1h2v1h3V1h2v6H9V6H6v1H4z" fill="#888"/></svg></td><td>t<i>=</i></td><td>0.034</td><td>0.034</td><td>ketebalan tembaga</td></tr>
                  <tr><td><svg class="pin" viewBox="0 0 12 8"><path d="M0 4h5" stroke="#888"/><path d="M4 1h2v1h3V1h2v6H9V6H6v1H4z" fill="#888"/></svg></td><td>wf<i>=</i></td><td>3.108</td><td>3.108</td><td>lebar feedline</td></tr>
                </tbody>
              </table>
              <div class="vscroll"><button aria-label="Scroll up"><svg width="10" height="8" viewBox="0 0 10 8"><path d="M1 7h8L5 2z" fill="#666"/></svg></button><i class="thumb"></i><i class="track"></i><button aria-label="Scroll down"><svg width="10" height="8" viewBox="0 0 10 8"><path d="M1 1h8L5 6z" fill="#666"/></svg></button></div>
            </div>
            <div class="btabs"><button class="on">Parameter List</button><button>Result Navigator</button><i></i></div>
          </section>
          <section class="msgs">
            <h2 class="phead">Messages<button aria-label="Close messages"><svg width="10" height="10"><use href="#close"/></svg></button></h2>
            <div class="mtools">
              <button aria-label="Errors"><svg width="14" height="14" viewBox="0 0 14 14"><circle cx="7" cy="7" r="6.500" fill="#888"/><path d="M4 4l6 6m0-6l-6 6" stroke="#fff" stroke-width="2"/></svg></button>
              <button aria-label="Warnings"><svg width="14" height="14" viewBox="0 0 14 14"><path d="M7 1l6 12H1z" fill="#aaa"/><path d="M7 5v4M7 10v2" stroke="#444" stroke-width="1.500"/></svg></button>
              <button aria-label="Info"><svg width="14" height="14" viewBox="0 0 14 14"><circle cx="7" cy="7" r="6.300" fill="#fafafa" stroke="#aaa"/><path d="M7 3v1.700M5.500 6H7v5M5 11h4" stroke="#555" stroke-width="1.500" fill="none"/></svg></button>
              <i></i>
              <button aria-label="Clear"><svg width="14" height="14" viewBox="0 0 14 14"><path d="M7 2.500h7M7 7h7M3 11.500h11" stroke="#666" stroke-width="1.600"/><path d="M1 1l5 7m0-7L1 8" stroke="#666" stroke-width="1.300"/></svg></button>
            </div>
            <div class="mlist"></div>
            <div class="btabs"><button class="on">Messages</button><button>Progress</button><i></i></div>
          </section>
        </div>
      </div>
    </main>

    <footer class="status">
      <span class="ready">Ready</span>
      <div class="sicons">
        <button aria-label="Zoom window"><svg class="ic" viewBox="0 0 16 16"><path d="M1 1h8v8H1z" fill="none" stroke="#888" stroke-dasharray="1 1"/><circle cx="8" cy="8" r="4.800" fill="#f4f4f4" stroke="#666" stroke-width="1.400"/><path d="M5.500 8h5M8 5.500v5" stroke="#d0702c" stroke-width="1.400"/><path d="M12 12l3.500 3.500" stroke="#444" stroke-width="2.400"/></svg></button>
        <button aria-label="Pan"><svg class="ic" viewBox="0 0 16 16"><path d="M8 0l3 3.500H9V7h3.500V5L16 8l-3.500 3V9H9v3.500h2L8 16l-3-3.500h2V9H3.500v2L0 8l3.500-3v2H7V3.500H5z" fill="#eeae50" stroke="#b0762c" stroke-width=".6"/></svg></button>
        <button class="on" aria-label="Rotate"><svg class="ic" viewBox="0 0 16 16"><ellipse cx="8" cy="10" rx="6.500" ry="4.500" fill="#5a5a5a"/><path d="M1 9q0-6 8-6l4 2 2-2 .5 7-6-1.500 2-1Q5 6 3 10z" fill="#dc8a28" stroke="#8c5410" stroke-width=".5"/><path d="M3 8q3-4 8-2" fill="none" stroke="#fbd89c"/></svg></button>
        <button aria-label="Dynamic zoom"><svg class="ic" viewBox="0 0 16 16"><circle cx="7" cy="7" r="5.800" fill="#f8f0e4" stroke="#777" stroke-width="1.400"/><path d="M4 6h6L7 3zM4 8h6l-3 3z" fill="#d0602c"/><path d="M11.500 11.500l4 4" stroke="#444" stroke-width="2.400"/></svg></button>
        <button aria-label="Rotate in plane"><svg class="ic" viewBox="0 0 16 16"><path d="M3 4a6 6 0 1 0 10 0" fill="none" stroke="#9c6420" stroke-width="4"/><path d="M3 4a6 6 0 1 0 10 0" fill="none" stroke="#eca848" stroke-width="2.600"/><path d="M9 4l5-4 1.500 6z" fill="#e09838"/><circle cx="8" cy="8" r="2" fill="#888"/></svg></button>
        <i></i>
        <button aria-label="Reset view"><svg class="ic" viewBox="0 0 16 16"><path d="M1 1h14v14H1z" fill="#faf6f2" stroke="#999"/><path d="M3 6V3h3M10 3h3v3M13 10v3h-3M6 13H3v-3M3 3l3 3M13 3l-3 3M13 13l-3-3M3 13l3-3" fill="none" stroke="#d06830"/></svg></button>
        <button aria-label="Section"><svg class="ic" viewBox="0 0 16 16"><path d="M1 15l4-4M12 4l3-3" stroke="#555" stroke-width="2"/><path d="M4 3h10l-1 9-2 2H2z" fill="#b05e2c" stroke="#6c4420"/><path d="M5 4h8l-1 7H4z" fill="#c87840"/></svg></button>
        <button class="cube" aria-label="View cube"><svg class="ic" viewBox="0 0 16 16"><path d="M8 .8l6.500 3v8L8 15.300l-6.500-3.500v-8zM1.500 3.800L8 7l6.500-3.200M8 7v8" fill="#f8f8f8" stroke="#777"/></svg><svg class="ar"><use href="#arrow"/></svg></button>
      </div>
      <span class="blue">Raster=1.000</span><b></b><span class="blue">Normal</span><b></b><span>mm</span><span>GHz</span><span>ns</span><span>Kelvin</span><b></b>
    </footer>
  </div>
</div>
</body>
</html>
```
FILE: styles.css
```css
* { box-sizing: border-box; }
body { margin: 0; font-family: "Open Sans", "Noto Sans", sans-serif; font-size: 12px; line-height: 16px; color: #444; }
button { border: 0; padding: 0; margin: 0; background: none; font: inherit; color: inherit; display: flex; align-items: center; justify-content: center; white-space: nowrap; }
svg { display: block; flex: none; overflow: visible; }
i { flex: none; }
.defs { position: absolute; width: 0; height: 0; }
.ic { width: 16px; height: 16px; }
.lg { width: 32px; height: 32px; }
.ar { width: 8px; height: 8px; color: #143c4c; }
.ar.off, .off .ar { color: #aaa; }
.white { color: #fff; }

.screen { display: flex; height: 100vh; min-height: 720px; overflow: hidden; }

/* desktop taskbar */
.taskbar { flex: none; width: 65px; display: flex; flex-direction: column; background: linear-gradient(#1a1a28, #151c2a 40%, #18263c 60%, #191c28); color: #fff; overflow: hidden; }
.taskbar > * { flex: none; }
.tb-btn { height: 40px; }
.grip { height: 21px; padding: 7px 8px 0; }
.grip::before { content: ""; display: block; height: 3px; border: solid #3e424e; border-width: 1px 0; }
.tb-active { height: 48px; background: #4a4d57; border-left: 2px solid #76b9ed; border-right: 4px solid #3b3e49; }
.tb-gap { height: 47px; }
.tb-scroll { height: 18px; background: #f0f0f0; display: grid; grid-template-columns: 20px 17px 20px; justify-content: center; align-items: center; justify-items: center; }
.tb-scroll svg:first-child { justify-self: start; }
.tb-scroll svg:last-child { justify-self: end; }
.tb-scroll i { background: #cdcdcd; align-self: stretch; justify-self: stretch; }
.tb-addr { height: 24px; line-height: 20px; text-align: center; color: #ddd; }
.tb-box { height: 33px; margin: 0 2px 0 1px; background: #fff; display: grid; grid-template-columns: 28px 1fr; }
.tb-box button + button { border-left: 1px solid #ddd; }
.tb-warn { height: 37px; display: flex; align-items: flex-end; justify-content: center; }
.tb-news { height: 18px; line-height: 18px; text-align: center; }
.tb-more { height: 50px; padding: 0 18px 9px 0; display: flex; align-items: flex-end; justify-content: flex-end; }
.tb-pair { height: 33px; display: grid; grid-template-columns: 23px 1fr; align-items: center; justify-items: center; }
.tb-sound { height: 27px; }
.tb-pen { height: 43px; display: flex; align-items: center; justify-content: center; }
.tb-key { height: 38px; display: flex; align-items: center; justify-content: center; }
.tb-clock { margin-top: 14px; display: flex; flex-direction: column; line-height: 20px; align-items: center; font-size: 11px; }
.tb-note { height: 50px; border-bottom: 1px solid #555a66; display: flex; align-items: center; justify-content: center; }

/* application frame */
.app { flex: 1; min-width: 0; display: flex; flex-direction: column; border-left: 1px solid #c8ccd2; background: #e5e5e5; }
.titlebar { height: 31px; background: #055c80; border-top: 1px solid #2c7495; display: grid; grid-template-columns: 564fr auto 481fr; color: #fff; }
.quick { display: flex; padding-left: 8px; height: 26px; }
.quick button { width: 23px; }
.quick .q-more { width: 16px; }
.title { line-height: 29px; }
.winbtns { display: flex; justify-content: flex-end; height: 24px; }
.winbtns button { width: 36px; }
.tabs { height: 24px; background: #055c80; display: flex; color: #e4eef2; }
.tabs > button { padding: 3px 10px 0; }
.tabs .file { padding: 2px 22px 0 19px; }
.tabs .on { background: #f0f0f0; color: #055c80; }
.helpers { margin-left: auto; display: flex; gap: 8px; padding-right: 2px; }

/* ribbon */
.ribbon { height: 102px; padding: 6px 6px 0 0; background: #f0f0f0; border-bottom: 1px solid #d4d4d4; display: grid; grid-template-columns: 97fr 129fr 207fr 191fr 54fr 83fr 189fr 86fr 172fr; }
.group { min-width: 0; height: 93px; border-right: 1px solid #dadada; display: flex; flex-direction: column; }
.gbody { height: 72px; display: flex; }
.center { justify-content: center; }
.cap { text-align: center; line-height: 18px; color: #555; }
.big { flex-direction: column; justify-content: flex-start; }
.big .lg { margin: 3px 0; }
.big span { text-align: center; }
.big > .ar { margin-top: 4px; }
.big span .ar { display: inline-block; margin-left: 3px; }
.off { color: #a0a0a0; }
.rows { display: grid; grid-auto-rows: 24px; align-content: start; justify-items: start; }
.lab { gap: 3px; }
.lab .ar { margin-left: 1px; }
.mini { gap: 5px; }
.mats { padding-left: 9px; }
.shapes { flex-direction: column; padding: 3px 0 0 8px; }
.strip { display: flex; height: 32px; align-items: center; }
.strip button { width: 24px; height: 24px; }
.strip .ar { margin: 0 1px; }
.strip i { width: 1px; height: 18px; margin: 0 1px; background: #d0d0d0; }
.tools { display: grid; grid-template-columns: 73px 1fr 37px; }
.tools .lab { gap: 2px; }
.picks { display: grid; grid-template-columns: 48px 1fr; padding-left: 1px; }
.edit { display: grid; grid-template-columns: 74px 46px 35px 34px; }
.wcs { display: grid; grid-template-columns: 51px 1fr; }
.section { display: grid; grid-template-columns: 54px 1fr; padding-right: 4px; }
.fields { display: grid; grid-auto-rows: 24px; min-width: 0; }
.field { display: grid; grid-template-columns: 49px 1fr; align-items: center; }
.field label { white-space: nowrap; }
.sel { display: grid; align-items: center; }
.sel select, .sel .ar { grid-area: 1 / 1; }
.sel .ar { justify-self: end; margin-right: 4px; pointer-events: none; color: #666; }
.field select, .field input { width: 100%; height: 24px; appearance: none; border: 1px solid #b4b4b4; border-radius: 0; background: #fff; padding: 0 3px; font: inherit; color: #333; }
.slide { display: flex; align-items: center; gap: 3px; }
.slide span { font-size: 14px; }
.slide input { flex: 1; min-width: 0; width: 0; margin: 0; height: 20px; appearance: none; background: none; }
.slide input::-webkit-slider-runnable-track { height: 2px; background: #b0b0b0; }
.slide input::-webkit-slider-thumb { appearance: none; width: 6px; height: 20px; margin-top: -9px; background: #ececec; border: 1px solid #999; }

/* workspace */
.work { flex: 1; min-height: 0; display: grid; grid-template-columns: 254px 1fr; column-gap: 6px; }
.phead { margin: 0; flex: none; height: 17px; padding: 0 3px 2px 2px; background: #fff; display: flex; align-items: center; justify-content: space-between; font-size: 11px; line-height: 15px; font-weight: 500; color: #222; }
.phead button { color: #000; }
.nav { display: flex; flex-direction: column; min-height: 0; }
.tree { flex: 1; margin: 0; padding: 0 0 0 3px; list-style: none; background: #fff; border: 1px solid #8a8a8a; border-right-color: #ddd; border-bottom-color: #ddd; font-family: "Liberation Sans", Arial, sans-serif; font-size: 11px; color: #222; }
.tree li { height: 16px; display: flex; align-items: center; white-space: nowrap; }
.tl { width: 19px; height: 16px; }
.ti { width: 16px; height: 16px; margin-right: 5px; }
.leaf .ti { margin-left: 10px; margin-right: 4px; }
.right { min-width: 0; display: flex; flex-direction: column; }
.doctabs { height: 27px; display: flex; }
.doctab { display: flex; align-items: center; gap: 4px; padding: 0 12px 0 10px; background: #fff; border: 1px solid #aaa; border-bottom: 0; font-size: 11px; font-weight: 500; color: #222; }
.view { flex: 1; min-height: 0; border: 3px solid #c4c6c2; border-top-color: #9a9d98; border-bottom-width: 2px; }
.view svg { width: 100%; height: 100%; overflow: hidden; }
.axes text { font: bold 14px "DejaVu Sans Mono", monospace; text-anchor: middle; }
.vtabs, .btabs { display: flex; align-items: center; font-size: 11px; font-weight: 500; color: #222; }
.vtabs { height: 22px; border-bottom: 4px solid #d0d0d0; }
.vtabs button { align-self: stretch; width: 99px; }
.vtabs .on, .btabs .on { background: #fff; border-bottom: 2px solid #1c6484; border-right: 1px solid #bbb; }
.vtabs i, .btabs i { width: 1px; height: 11px; background: #999; }
.bottom { height: 129px; display: grid; grid-template-columns: 592fr 357fr; grid-template-rows: minmax(0, 1fr); column-gap: 5px; }
.params, .msgs { min-width: 0; min-height: 0; display: flex; flex-direction: column; }
.btabs { flex: none; height: 20px; }
.btabs button { align-self: stretch; padding: 0 10px; }
.ptable { flex: 1; min-height: 0; display: grid; grid-template-columns: 1fr 16px; grid-template-rows: minmax(0, 1fr); background: #fff; border: 1px solid #888; overflow: hidden; color: #333; }
table { width: 100%; border-collapse: collapse; table-layout: fixed; align-self: start; }
th { height: 23px; padding: 0 4px; text-align: left; font-weight: 400; border-right: 1px solid #e4e4e4; color: #222; }
th:first-child, td:first-child { width: 23px; padding: 0 4px; }
.sorted svg { float: right; margin: -2px 62px 0 0; }
td { height: 18px; line-height: 17px; padding: 0 3px; border-bottom: 1px solid #eaeaea; white-space: nowrap; }
td:first-child { background: #e4e4e4; border-bottom-color: #e4e4e4; }
td:nth-child(2) { padding-right: 0; }
td:nth-child(3), td:nth-child(5) { color: #222; }
td:nth-child(4) { color: #888; }
td i { float: right; color: #aaa; font-style: normal; font-size: 10px; }
.pin { width: 12px; height: 8px; margin-left: 1px; }
.vscroll { display: grid; grid-template-rows: 17px 34px 1fr 16px; background: #c8c8c8; border-left: 1px solid #999; }
.vscroll button { background: #fff; border: 1px solid #aaa; }
.thumb { background: #eee; border: 1px solid #bbb; }
.mtools { flex: none; height: 20px; display: flex; align-items: center; gap: 7px; }
.mtools button { width: 22px; }
.mtools i { width: 1px; height: 17px; background: #aaa; }
.mlist { flex: 1; background: #fff; border: 2px solid #888; border-right-width: 0; border-bottom: 1px solid #ddd; }

/* status bar */
.status { height: 29px; background: #f0f0f0; display: flex; align-items: center; gap: 6px; padding: 0 1px 0 5px; color: #666; }
.ready { margin-right: auto; }
.sicons { display: flex; align-items: center; }
.sicons button { width: 23px; height: 22px; }
.sicons .on { background: #c8c8c8; }
.sicons i { width: 1px; height: 16px; margin: 0 2px; background: #ccc; }
.sicons .cube { width: 32px; }
.sicons .ar { color: #777; }
.blue { color: #2c3c78; }
.status b { width: 1px; height: 17px; background: #333; }
```
